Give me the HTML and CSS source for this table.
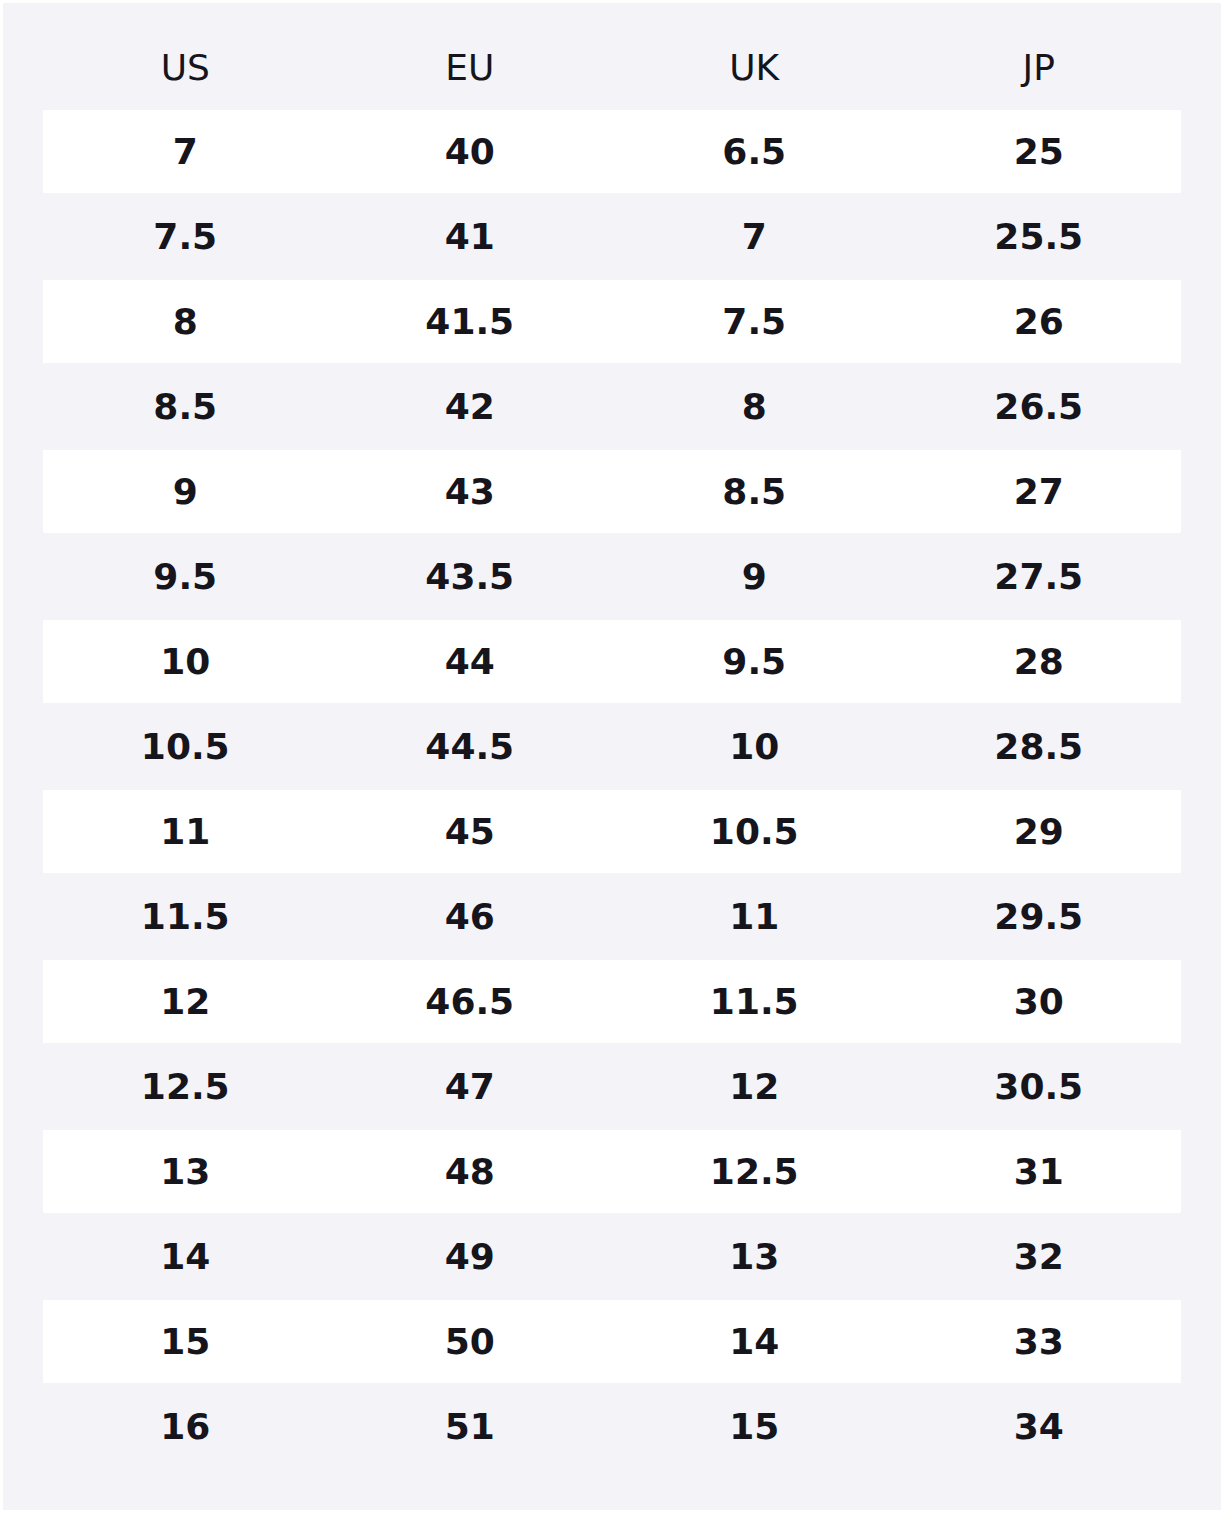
FILE: index.html
```html
<!DOCTYPE html>
<html lang="en">
<head>
<meta charset="utf-8">
<title>Size chart</title>
<link rel="stylesheet" href="styles.css">
</head>
<body>
<div class="chart">
  <div class="row head"><div>US</div><div>EU</div><div>UK</div><div>JP</div></div>
  <div class="row odd"><div>7</div><div>40</div><div>6.5</div><div>25</div></div>
  <div class="row"><div>7.5</div><div>41</div><div>7</div><div>25.5</div></div>
  <div class="row odd"><div>8</div><div>41.5</div><div>7.5</div><div>26</div></div>
  <div class="row"><div>8.5</div><div>42</div><div>8</div><div>26.5</div></div>
  <div class="row odd"><div>9</div><div>43</div><div>8.5</div><div>27</div></div>
  <div class="row"><div>9.5</div><div>43.5</div><div>9</div><div>27.5</div></div>
  <div class="row odd"><div>10</div><div>44</div><div>9.5</div><div>28</div></div>
  <div class="row"><div>10.5</div><div>44.5</div><div>10</div><div>28.5</div></div>
  <div class="row odd"><div>11</div><div>45</div><div>10.5</div><div>29</div></div>
  <div class="row"><div>11.5</div><div>46</div><div>11</div><div>29.5</div></div>
  <div class="row odd"><div>12</div><div>46.5</div><div>11.5</div><div>30</div></div>
  <div class="row"><div>12.5</div><div>47</div><div>12</div><div>30.5</div></div>
  <div class="row odd"><div>13</div><div>48</div><div>12.5</div><div>31</div></div>
  <div class="row"><div>14</div><div>49</div><div>13</div><div>32</div></div>
  <div class="row odd"><div>15</div><div>50</div><div>14</div><div>33</div></div>
  <div class="row"><div>16</div><div>51</div><div>15</div><div>34</div></div>
</div>
</body>
</html>
```
FILE: styles.css
```css
html, body {
  margin: 0;
  padding: 0;
  background: #ffffff;
}
body {
  padding: 3px;
  font-family: "DejaVu Sans", "Liberation Sans", sans-serif;
  color: #16151b;
}
.chart {
  background: #f4f4f8;
  height: 1507px;
  box-sizing: border-box;
  padding: 40px 40px 41px;
}
.row {
  display: grid;
  grid-template-columns: repeat(4, 1fr);
  height: 85px;
  box-sizing: border-box;
  border-top: 1px solid transparent;
  border-bottom: 1px solid transparent;
  background-clip: padding-box;
  align-items: center;
  text-align: center;
  font-size: 36px;
  font-weight: bold;
  line-height: 42px;
}
.row.odd {
  background-color: #ffffff;
}
.row.head {
  height: 66px;
  border: 0;
  align-items: start;
  padding-top: 4px;
  font-weight: normal;
}
```
